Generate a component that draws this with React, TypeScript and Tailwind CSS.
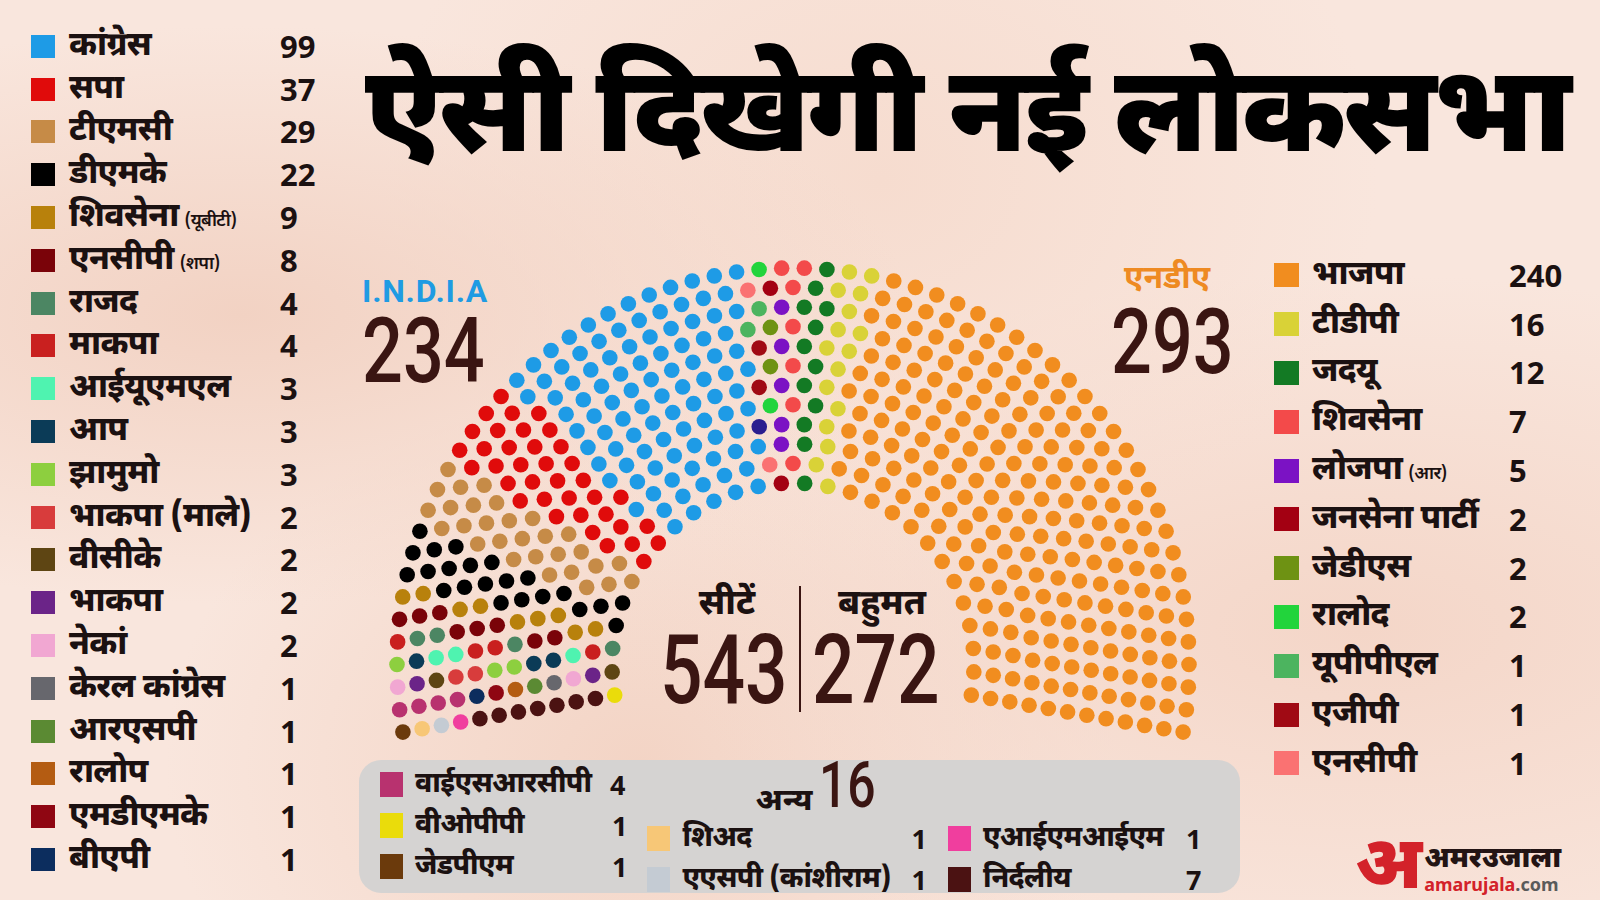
import React from 'react';

type Party = { name: string; sub?: string; seats: number; color: string };

const india: Party[] = [
  { name: 'कांग्रेस', seats: 99, color: '#1e9be6' },
  { name: 'सपा', seats: 37, color: '#e00b0b' },
  { name: 'टीएमसी', seats: 29, color: '#c68b47' },
  { name: 'डीएमके', seats: 22, color: '#000000' },
  { name: 'शिवसेना', sub: '(यूबीटी)', seats: 9, color: '#b8810c' },
  { name: 'एनसीपी', sub: '(शपा)', seats: 8, color: '#7a0309' },
  { name: 'राजद', seats: 4, color: '#4c8663' },
  { name: 'माकपा', seats: 4, color: '#c9201f' },
  { name: 'आईयूएमएल', seats: 3, color: '#4ff3b0' },
  { name: 'आप', seats: 3, color: '#0b3b57' },
  { name: 'झामुमो', seats: 3, color: '#8dcf3f' },
  { name: 'भाकपा (माले)', seats: 2, color: '#d83c3c' },
  { name: 'वीसीके', seats: 2, color: '#5e4513' },
  { name: 'भाकपा', seats: 2, color: '#6b2488' },
  { name: 'नेकां', seats: 2, color: '#f1a7d2' },
  { name: 'केरल कांग्रेस', seats: 1, color: '#67676d' },
  { name: 'आरएसपी', seats: 1, color: '#5b8a33' },
  { name: 'रालोप', seats: 1, color: '#b45c12' },
  { name: 'एमडीएमके', seats: 1, color: '#8f0612' },
  { name: 'बीएपी', seats: 1, color: '#0c2d5e' },
];

const nda: Party[] = [
  { name: 'भाजपा', seats: 240, color: '#f18d1f' },
  { name: 'टीडीपी', seats: 16, color: '#d9d237' },
  { name: 'जदयू', seats: 12, color: '#137a24' },
  { name: 'शिवसेना', seats: 7, color: '#f34a4a' },
  { name: 'लोजपा', sub: '(आर)', seats: 5, color: '#7b12c4' },
  { name: 'जनसेना पार्टी', seats: 2, color: '#a30012' },
  { name: 'जेडीएस', seats: 2, color: '#6e9213' },
  { name: 'रालोद', seats: 2, color: '#22d43c' },
  { name: 'यूपीपीएल', seats: 1, color: '#4cb45f' },
  { name: 'एजीपी', seats: 1, color: '#a00a14' },
  { name: 'एनसीपी', seats: 1, color: '#fa7272' },
];

const others = {
  ysrcp: { name: 'वाईएसआरसीपी', seats: 4, color: '#b8326f' },
  votpp: { name: 'वीओपीपी', seats: 1, color: '#eadc0b' },
  zpm: { name: 'जेडपीएम', seats: 1, color: '#6b3a0c' },
  sad: { name: 'शिअद', seats: 1, color: '#f7c777' },
  asp: { name: 'एएसपी (कांशीराम)', seats: 1, color: '#c4cbd3' },
  aimim: { name: 'एआईएमआईएम', seats: 1, color: '#f03e9e' },
  ind: { name: 'निर्दलीय', seats: 7, color: '#4b1212' },
};

// seat order around the arc, left to right
const seatColors: string[] = (() => {
  const out: string[] = [];
  const push = (p: { seats: number; color: string }) => {
    for (let i = 0; i < p.seats; i++) out.push(p.color);
  };
  [others.zpm, others.sad, others.asp, others.aimim, others.ind, others.votpp, others.ysrcp].forEach(push);
  [...india].reverse().forEach(push);
  // four NDA seats with no legend entry
  ['#2b1e8f', '#4cb45f', '#a00a14', '#fa7272'].forEach((c) => out.push(c));
  [...nda].reverse().forEach(push);
  return out;
})();

const CX = 434;
const CY = 494;
const R_IN = 181;
const R_OUT = 396;
const ROWS = 12;
const A0 = (189.9 * Math.PI) / 180;
const A1 = (-9.9 * Math.PI) / 180;

type Seat = { x: number; y: number; a: number; r: number; color: string };

function buildSeats(colors: string[]): Seat[] {
  const radii = Array.from({ length: ROWS }, (_, i) => R_IN + (i * (R_OUT - R_IN)) / (ROWS - 1));
  const sumR = radii.reduce((a, b) => a + b, 0);
  const total = colors.length;
  const raw = radii.map((r) => (r / sumR) * total);
  const counts = raw.map(Math.floor);
  const left = total - counts.reduce((a, b) => a + b, 0);
  const order = raw.map((v, i) => [v - Math.floor(v), i]).sort((a, b) => b[0] - a[0]);
  for (let k = 0; k < left; k++) counts[order[k][1]]++;
  const pts: Omit<Seat, 'color'>[] = [];
  radii.forEach((r, i) => {
    const n = counts[i];
    for (let j = 0; j < n; j++) {
      const a = A0 + ((A1 - A0) * j) / (n - 1);
      pts.push({ a, r, x: CX + r * Math.cos(a), y: CY - r * Math.sin(a) });
    }
  });
  pts.sort((p, q) => (Math.abs(p.a - q.a) < 1e-6 ? q.r - p.r : q.a - p.a));
  return pts.map((p, k) => ({ ...p, color: colors[k] }));
}

const seats = buildSeats(seatColors);

const hindi = { fontFamily: '"Noto Sans Devanagari", "Lohit Devanagari", "Noto Sans", sans-serif' };
const digits = { fontFamily: '"Noto Sans", "Open Sans", sans-serif' };
const big = { fontFamily: 'Roboto, "Noto Sans", sans-serif' };

const LegendRow: React.FC<{ p: Party; labelW: string; h: string; sq: string }> = ({ p, labelW, h, sq }) => (
  <div className={`flex items-center ${h}`}>
    <div className={`${sq} shrink-0`} style={{ backgroundColor: p.color }} />
    <div
      className={`${labelW} flex items-baseline text-[33px] font-extrabold leading-none text-[#1b1111] tracking-[-0.02em] whitespace-nowrap`}
      style={hindi}
    >
      <span>{p.name}</span>
      {p.sub && <span className="ml-1.5 text-[18px] font-semibold">{p.sub}</span>}
    </div>
    <div className="text-[31px] font-bold leading-none text-[#1b1111]" style={digits}>
      {p.seats}
    </div>
  </div>
);

const OtherRow: React.FC<{ p: { name: string; seats: number; color: string }; labelW: string }> = ({ p, labelW }) => (
  <div className="flex items-center h-[41px]">
    <div className="w-[23px] h-[25px] shrink-0" style={{ backgroundColor: p.color }} />
    <div
      className={`${labelW} pl-[12px] text-[28px] font-extrabold leading-none text-[#1b1111] tracking-[-0.02em] whitespace-nowrap`}
      style={hindi}
    >
      {p.name}
    </div>
    <div className="text-[27px] font-bold leading-none text-[#1b1111]" style={digits}>
      {p.seats}
    </div>
  </div>
);

export default function App() {
  return (
    <div className="w-[1600px] h-[900px] overflow-hidden flex bg-[#f9e6dd] bg-[radial-gradient(ellipse_at_15%_35%,#f2d2c3_0%,transparent_35%),radial-gradient(ellipse_at_55%_20%,#f6dccf_0%,transparent_40%),radial-gradient(ellipse_at_85%_70%,#f4d6c8_0%,transparent_40%),radial-gradient(ellipse_at_40%_85%,#f3d4c5_0%,transparent_35%)]">
      {/* left legend */}
      <div className="w-[345px] shrink-0 pl-[31px] pt-[25px] flex flex-col">
        {india.map((p) => (
          <LegendRow key={p.name + p.seats} p={p} labelW="w-[225px] pl-[14px]" h="h-[42.8px]" sq="w-[24px] h-[23px]" />
        ))}
      </div>

      <div className="flex-1 flex flex-col">
        <div className="h-[170px] pl-[20px] pt-[72px]">
          <h1 className="text-[120px] font-black leading-[100px] text-black tracking-tight whitespace-nowrap" style={hindi}>
            ऐसी दिखेगी नई लोकसभा
          </h1>
        </div>

        <div className="flex flex-1">
          <div className="w-[895px] shrink-0 pl-[14px] flex flex-col">
            <div className="relative w-[881px] h-[590px]">
              <svg width="881" height="590" viewBox="0 0 881 590" className="block">
                {seats.map((s, i) => (
                  <circle key={i} cx={s.x} cy={s.y} r={7.8} fill={s.color} />
                ))}
              </svg>

              <div className="absolute left-[3px] top-[105px] flex flex-col">
                <div className="text-[32px] font-bold leading-none text-[#1f9be3] tracking-wide" style={big}>
                  I.N.D.I.A
                </div>
                <div className="origin-left scale-x-[0.8] text-[90px] font-medium leading-none text-[#3a1512]" style={big}>
                  234
                </div>
              </div>

              <div className="absolute left-[752px] top-[94px] flex flex-col">
                <div className="pl-[13px] text-[32px] font-bold leading-none text-[#ee8a22]" style={hindi}>
                  एनडीए
                </div>
                <div className="mt-[2px] origin-left scale-x-[0.8] text-[90px] font-medium leading-none text-[#3a1512]" style={big}>
                  293
                </div>
              </div>

              <div className="absolute left-[290px] top-[410px] flex items-stretch">
                <div className="flex flex-col items-center w-[150px]">
                  <div className="h-[42px] pt-[10px] text-[35px] font-extrabold leading-[32px] text-[#1b1111] pl-[6px]" style={hindi}>
                    सीटें
                  </div>
                  <div className="scale-x-[0.78] text-[96px] font-medium leading-none text-[#3a1512]" style={big}>
                    543
                  </div>
                </div>
                <div className="w-[2px] bg-[#3a1512] mt-[6px] mb-[6px]" />
                <div className="flex flex-col items-center w-[150px]">
                  <div className="h-[42px] pt-[10px] text-[35px] font-extrabold leading-[32px] text-[#1b1111] pl-[12px]" style={hindi}>
                    बहुमत
                  </div>
                  <div className="scale-x-[0.78] text-[96px] font-medium leading-none text-[#3a1512]" style={big}>
                    272
                  </div>
                </div>
              </div>
            </div>

            {/* others box */}
            <div className="w-[881px] h-[133px] rounded-[22px] bg-[#d5d3d2] flex pl-[21px] pt-[4px]">
              <div className="flex flex-col">
                <OtherRow p={others.ysrcp} labelW="w-[207px]" />
                <OtherRow p={others.votpp} labelW="w-[209px]" />
                <OtherRow p={others.zpm} labelW="w-[209px]" />
              </div>
              <div className="flex flex-col pl-[20px]">
                <div className="flex items-end pl-[108px] h-[54px]">
                  <span className="text-[31px] font-extrabold leading-none text-[#1b1111]" style={hindi}>
                    अन्य
                  </span>
                  <span className="ml-[6px] origin-left scale-x-[0.78] text-[64px] font-medium leading-none text-[#3a1512]" style={big}>
                    16
                  </span>
                </div>
                <div className="flex">
                  <div className="flex flex-col">
                    <OtherRow p={others.sad} labelW="w-[241px]" />
                    <OtherRow p={others.asp} labelW="w-[241px]" />
                  </div>
                  <div className="flex flex-col pl-[21px]">
                    <OtherRow p={others.aimim} labelW="w-[215px]" />
                    <OtherRow p={others.ind} labelW="w-[215px]" />
                  </div>
                </div>
              </div>
            </div>
          </div>

          {/* right legend */}
          <div className="flex-1 flex flex-col pl-[34px] pt-[81px]">
            {nda.map((p) => (
              <LegendRow key={p.name + p.seats} p={p} labelW="w-[210px] pl-[13px]" h="h-[48.8px]" sq="w-[25px] h-[24px]" />
            ))}
            <div className="mt-auto mb-[2px] pl-[81px] flex items-center h-[56px]">
              <span className="text-[74px] font-black leading-[56px] text-[#d3222a]" style={hindi}>
                अ
              </span>
              <div className="ml-[2px] flex flex-col leading-none">
                <span className="text-[28px] font-black leading-[28px] text-[#231414]" style={hindi}>
                  अमरउजाला
                </span>
                <span className="text-[18px] font-bold leading-[20px]" style={digits}>
                  <span className="text-[#d3222a]">amarujala</span>
                  <span className="text-[#5a5a5a]">.com</span>
                </span>
              </div>
            </div>
          </div>
        </div>
      </div>
    </div>
  );
}
